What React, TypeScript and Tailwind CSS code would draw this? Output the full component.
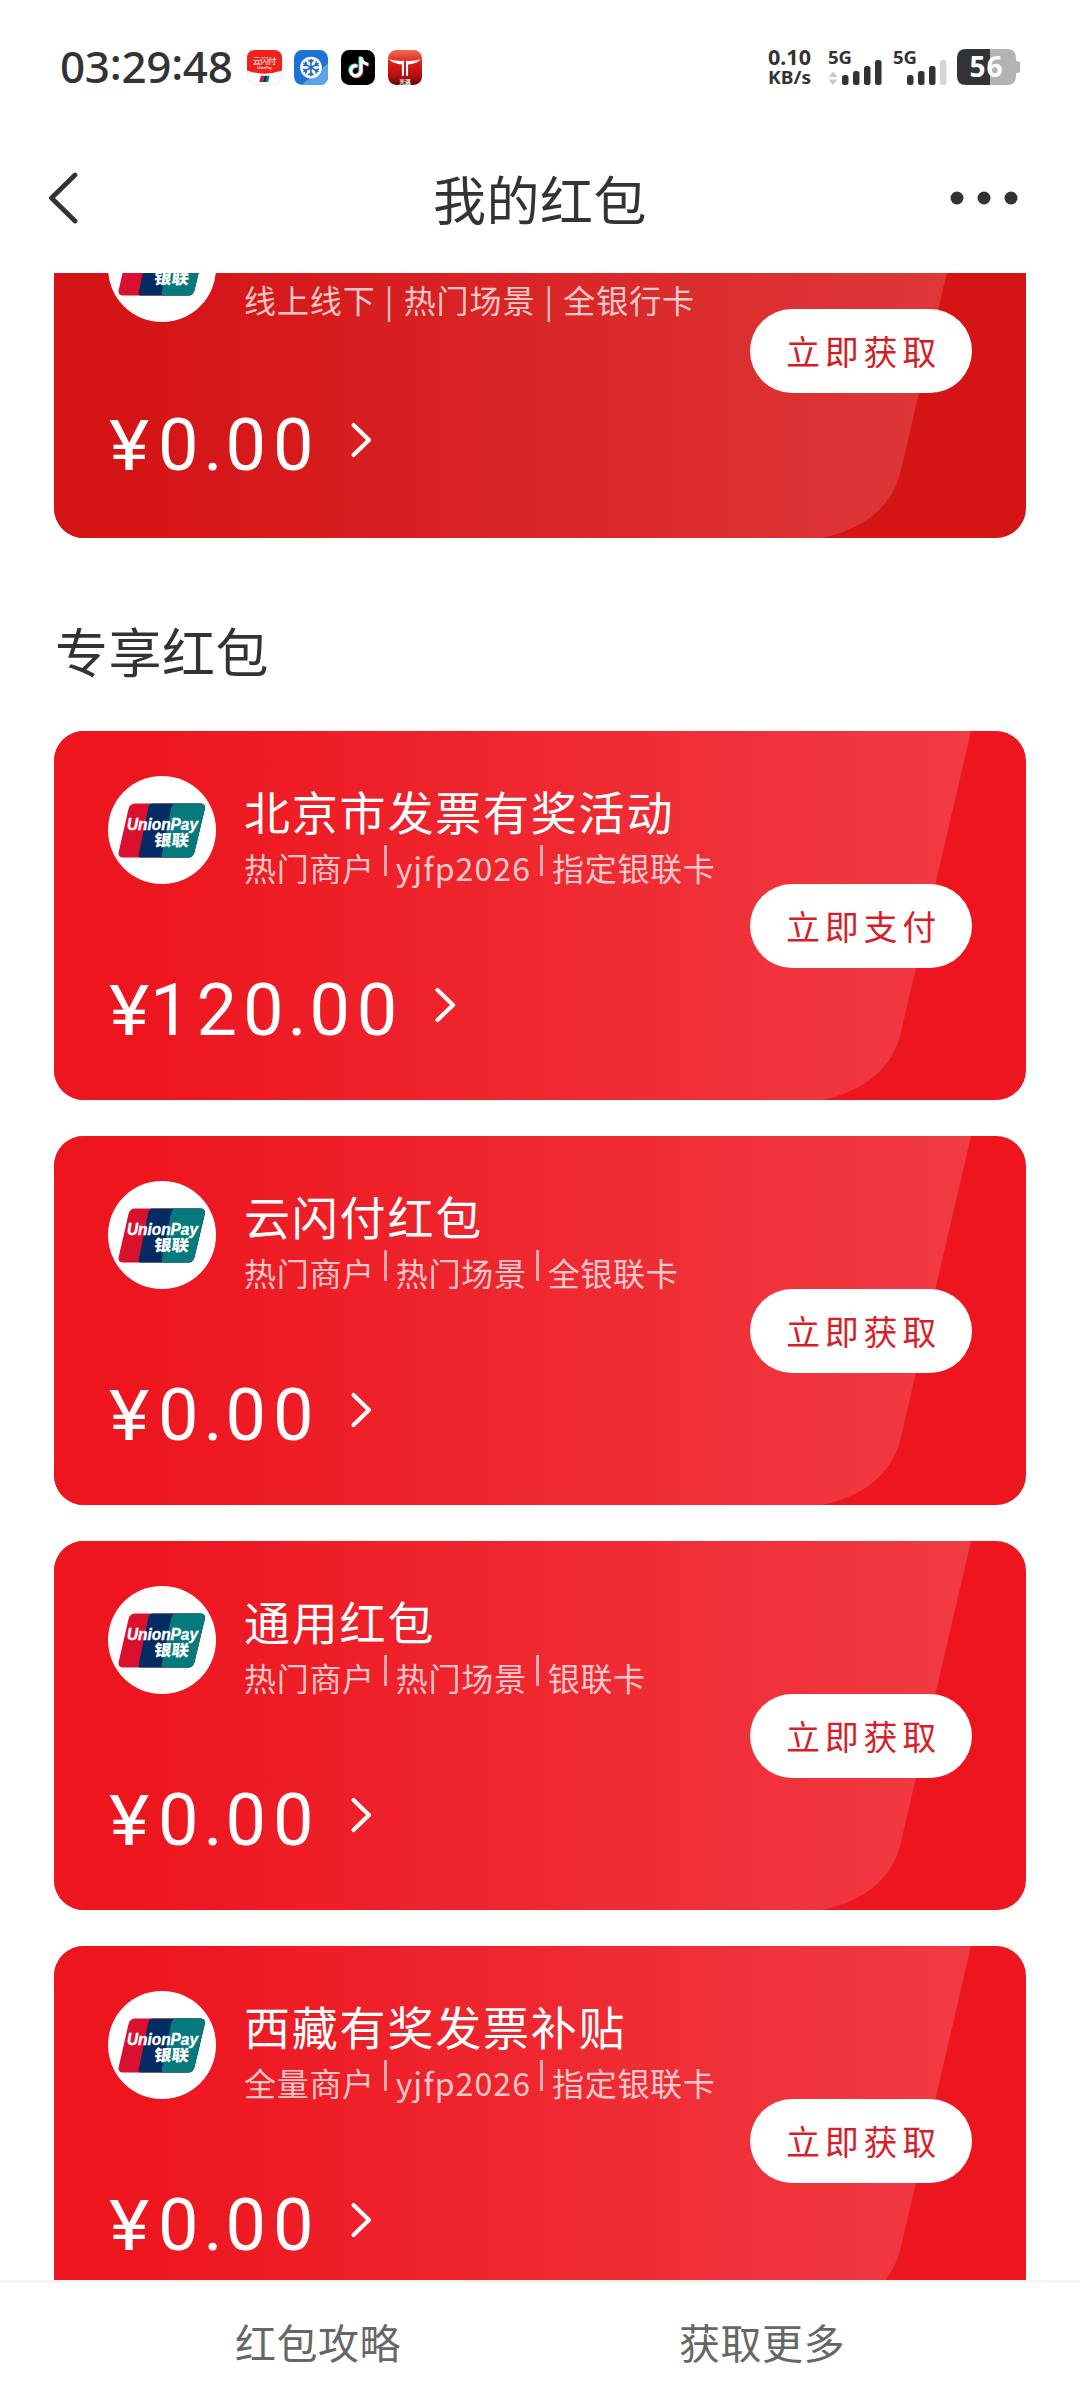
import React from "react";

type Card = {
  title: string;
  tags: string[];
  whole: string;
  action: string;
  dark?: boolean;
};

const cards: Card[] = [
  { title: "北京市发票有奖活动", tags: ["热门商户", "yjfp2026", "指定银联卡"], whole: "120", action: "立即支付" },
  { title: "云闪付红包", tags: ["热门商户", "热门场景", "全银联卡"], whole: "0", action: "立即获取" },
  { title: "通用红包", tags: ["热门商户", "热门场景", "银联卡"], whole: "0", action: "立即获取" },
  { title: "西藏有奖发票补贴", tags: ["全量商户", "yjfp2026", "指定银联卡"], whole: "0", action: "立即获取" },
];

function UnionPayLogo() {
  return (
    <div className="mt-[45px] flex h-[108px] w-[108px] shrink-0 items-center justify-center rounded-full bg-white">
      <svg width="88" height="55" viewBox="0 0 88 55">
        <defs>
          <clipPath id="up-shape">
            <path d="M17 .5H82Q88 .5 86.600 6.500L76.500 49Q75 54.500 70 54.500H5Q-.5 54.500 .8 48.500L10.500 6Q12 .5 17 .5Z" />
          </clipPath>
        </defs>
        <g clipPath="url(#up-shape)">
          <rect width="88" height="55" fill="#d9112f" />
          <path d="M32 0H88V55H22Q20 55 21 50L30 6Q31 0 35 0Z" fill="#042b62" />
          <path d="M59 0H88V55H46Q43 55 44 50L53 6Q54 0 59 0Z" fill="#047a7d" />
        </g>
        <text x="9" y="27" fontSize="17" fontWeight="700" fontStyle="italic" fill="#fff" stroke="#fff" strokeWidth=".4" textLength="71" lengthAdjust="spacingAndGlyphs" fontFamily="Liberation Sans, sans-serif">UnionPay</text>
        <text x="36" y="43" fontSize="16" fontWeight="900" fill="#fff" textLength="35" lengthAdjust="spacingAndGlyphs" transform="skewX(-6) translate(4 0)" fontFamily="Noto Sans CJK SC, sans-serif">银联</text>
      </svg>
    </div>
  );
}

function CardShade({ dark }: { dark?: boolean }) {
  const id = dark ? "shade-dark" : "shade-bright";
  return (
    <svg className="absolute inset-0" width="972" height="369" viewBox="0 0 972 369">
      <defs>
        <linearGradient id={id} gradientUnits="userSpaceOnUse" x1="0" y1="0" x2="920" y2="0">
          <stop offset="0.1" stopColor={dark ? "#d51416" : "#ed161f"} />
          <stop offset="1" stopColor={dark ? "#de393a" : "#f13b43"} />
        </linearGradient>
      </defs>
      <path d="M0 0H917L846 305Q832 355 768 369H0Z" fill={`url(#${id})`} />
    </svg>
  );
}

function Amount({ whole }: { whole: string }) {
  return (
    <div className="flex items-start">
      <span className="w-[49px] origin-left scale-x-108 text-[71px] leading-[72px]">¥</span>
      <span className={whole === "120" ? "-ml-[8px] text-[72px] leading-[72px] tracking-[6px]" : "text-[72px] leading-[72px] tracking-[7px]"}>{whole}</span>
      <span className="-ml-[2px] w-[22px] text-[72px] leading-[72px]">.</span>
      <span className="text-[72px] leading-[72px] tracking-[7px]">00</span>
    </div>
  );
}

function RedCard({ card }: { card: Card }) {
  const dark = card.dark;
  return (
    <article className={`relative h-[369px] w-[972px] shrink-0 overflow-hidden rounded-[30px] text-white ${dark ? "bg-[#d51416]" : "bg-[#ed161f]"}`}>
      <CardShade dark={dark} />
      <div className="relative flex h-full justify-between pl-[54px] pr-[54px]">
        <div className="flex flex-col">
          <div className="flex">
            <UnionPayLogo />
            <div className={dark ? "ml-[28px] pt-[44px]" : "ml-[28px] pt-[51px]"}>
              <h2 className="h-[60px] whitespace-nowrap text-[46px] leading-[56px] tracking-[1.8px]">{card.title}</h2>
              {dark ? (
                <p className="mt-[4px] whitespace-pre text-[32px] leading-[44px] tracking-[0.9px] text-white/75 [word-spacing:1.200px]">{card.tags.join(" | ")}</p>
              ) : (
                <div className="mt-px flex text-[32px] leading-[48px] text-white/75">
                  {card.tags.map((tag, i) => (
                    <React.Fragment key={tag}>
                      {i > 0 && <i className="ml-[9px] mr-[9px] mt-[2px] h-[31px] w-[3px] bg-white/60" />}
                      <span className={tag === "yjfp2026" ? "whitespace-nowrap tracking-[1.100px]" : "whitespace-nowrap tracking-[0.7px]"}>{tag}</span>
                    </React.Fragment>
                  ))}
                </div>
              )}
            </div>
          </div>
          <div className={`absolute left-[55px] flex font-[Roboto] ${dark ? "top-[241px]" : "top-[244px]"}`}>
            <Amount whole={card.whole} />
            <svg className="ml-[30px] mt-[11px]" width="24" height="38" viewBox="0 0 24 38" fill="none" stroke="#fff" strokeWidth="4.200" strokeLinecap="round" strokeLinejoin="round">
              <path d="M3.500 4L19 19L3.500 34" />
            </svg>
          </div>
        </div>
        <button className={`flex h-[84px] w-[222px] items-center justify-center rounded-full bg-white pb-[2px] pl-[5px] text-[34px] tracking-[4.700px] ${dark ? "mt-[140px] text-[#d51c26]" : "mt-[153px] text-[#d81e28]"}`}>
          {card.action}
        </button>
      </div>
    </article>
  );
}

function Signal({ arrows, weak }: { arrows?: boolean; weak?: boolean }) {
  return (
    <svg className="overflow-visible" width="56" height="38" viewBox="0 0 56 38" fill="#333">
      <text x="0" y="15.500" fontSize="18.500" fontWeight="700" fontFamily="Noto Sans, sans-serif" textLength="24" lengthAdjust="spacingAndGlyphs">5G</text>
      {arrows && <path d="M.5 29L5 23.500L9.500 29ZM.5 31.500L5 37L9.500 31.500Z" fill="#c9c9c9" />}
      <rect x="14" y="27" width="6.500" height="10" rx="2.500" />
      <rect x="25" y="23" width="6.500" height="14" rx="2.500" />
      <rect x="36" y="18" width="6.500" height="19" rx="2.500" />
      <rect x="47" y="12" width="6.500" height="25" rx="2.500" fill={weak ? "#d4d4d4" : "#333"} />
    </svg>
  );
}

function StatusBar() {
  return (
    <div className="flex h-[132px] items-start pl-[60px] pr-[60px] pt-[48px] text-[#333]">
      <span className="-mt-px flex w-[187px] font-['Noto_Sans'] text-[44px] font-medium leading-[38px] tracking-[-0.300px]">
        03<span className="-mt-[3px]">:</span>29<span className="-mt-[3px]">:</span>48
      </span>
      <div className="mt-[2px] flex gap-[12px]">
        <svg width="35" height="35" viewBox="0 0 34 34">
          <rect x=".5" y=".5" width="33" height="33" rx="8" fill="#fff" stroke="#eee" />
          <path d="M8 0H26Q34 0 34 8V20Q17 26 0 20V8Q0 0 8 0Z" fill="#f3211e" />
          <text x="5.500" y="14" fontSize="8" fill="#fff" textLength="23" fontFamily="Noto Sans CJK SC, sans-serif">云闪付</text>
          <text x="10" y="18.500" fontSize="4" fill="#fff" textLength="14" fontFamily="Liberation Sans, sans-serif">UnionPay</text>
          <path d="M13.500 25H17L15.500 31H12Z" fill="#d9112f" />
          <path d="M17 25H20L18.500 31H15.500Z" fill="#042b62" />
          <path d="M20 25H22L20.500 31H18Z" fill="#047a7d" />
        </svg>
        <svg width="35" height="35" viewBox="0 0 34 34">
          <rect width="33" height="34" rx="8" fill="#1c74d2" />
          <path d="M7 34L33 13V26Q33 34 25 34Z" fill="#5ca4e8" />
          <circle cx="16.500" cy="17" r="10.500" fill="#fff" />
          <g stroke="#1c6cc4" strokeWidth="1.500" fill="none">
            {[0, 60, 120, 180, 240, 300].map((a) => (
              <path key={a} transform={`rotate(${a} 16.500 17)`} d="M16.500 17V8.500M14 9.500L16.500 12L19 9.500" />
            ))}
          </g>
        </svg>
        <svg width="35" height="35" viewBox="0 0 34 34" fill="none" strokeWidth="3">
          <rect width="33" height="34" rx="8" fill="#000" />
          <path d="M16 15.500A5 5 0 1 0 19.500 21V7Q20 13 26.500 14" stroke="#25f4ee" transform="translate(-1 -.7)" />
          <path d="M16 15.500A5 5 0 1 0 19.500 21V7Q20 13 26.500 14" stroke="#fe2c55" transform="translate(.7 .7)" />
          <path d="M16 15.500A5 5 0 1 0 19.500 21V7Q20 13 26.500 14" stroke="#fff" />
        </svg>
        <svg width="35" height="35" viewBox="0 0 34 34">
          <defs>
            <linearGradient id="redapp" x1="0" y1="0" x2="0" y2="1">
              <stop offset="0" stopColor="#ef6a58" />
              <stop offset=".4" stopColor="#d81d18" />
              <stop offset=".75" stopColor="#b01010" />
              <stop offset="1" stopColor="#5c0808" />
            </linearGradient>
          </defs>
          <rect width="33" height="34" rx="8" fill="url(#redapp)" />
          <path d="M1 9Q8 11 15.500 10.500V25H13.500V14Q6 14 1 9ZM32 9Q25 11 17.500 10.500V25H19.500V14Q27 14 32 9Z" fill="#fff" />
          <text x="11" y="33" fontSize="5.500" fill="#fff" fontWeight="700" fontFamily="Noto Sans CJK SC, sans-serif">光遇</text>
        </svg>
      </div>
      <div className="ml-auto flex items-start">
        <svg className="mr-[15px] overflow-visible" width="46" height="38" viewBox="0 0 46 38" fill="#333" fontWeight="700" fontFamily="Noto Sans, sans-serif">
          <text x="1" y="17" fontSize="22" textLength="43" lengthAdjust="spacingAndGlyphs">0.10</text>
          <text x="1" y="36" fontSize="18.500" textLength="43" lengthAdjust="spacingAndGlyphs">KB/s</text>
        </svg>
        <Signal arrows />
        <span className="w-[9px]" />
        <Signal weak />
        <svg className="ml-[8px]" width="63" height="38" viewBox="0 0 63 38">
          <path d="M33 1H50Q59 1 59 10V28Q59 37 50 37H33Z" fill="#b3b3b3" />
          <path d="M59 13Q63 13 63 15V23Q63 25 59 25Z" fill="#b3b3b3" />
          <path d="M33 1H9Q0 1 0 10V28Q0 37 9 37H33Z" fill="#333" />
          <text x="12.500" y="29" fontSize="28" fontWeight="700" fill="#fff" fontFamily="Noto Sans, sans-serif" textLength="33">56</text>
        </svg>
      </div>
    </div>
  );
}

export default function App() {
  return (
    <main className="flex h-[2400px] w-[1080px] flex-col overflow-hidden bg-white font-['Noto_Sans_CJK_SC',sans-serif]">
      <StatusBar />
      <header className="flex h-[141px] shrink-0 items-start justify-between pl-[46px] pr-[60px] text-[#333]">
        <svg className="mt-[40px]" width="34" height="52" viewBox="0 0 34 52" fill="none" stroke="#333" strokeWidth="4.800" strokeLinecap="round" strokeLinejoin="round">
          <path d="M29 3L5.500 26L29 49" />
        </svg>
        <h1 className="ml-[50px] mt-[26px] text-[53px] leading-[80px] tracking-[0.500px]">我的红包</h1>
        <svg className="mt-[58px]" width="70" height="16" viewBox="0 0 70 16" fill="#333">
          <circle cx="7" cy="8" r="6.500" />
          <circle cx="34" cy="8" r="6.500" />
          <circle cx="61" cy="8" r="6.500" />
        </svg>
      </header>
      <section className="flex h-[2007px] shrink-0 flex-col items-center overflow-hidden">
        <div className="flex h-[265px] shrink-0 items-end overflow-hidden">
          <RedCard card={{ title: "通用红包", tags: ["线上线下", "热门场景", "全银行卡"], whole: "0", action: "立即获取", dark: true }} />
        </div>
        <h2 className="flex h-[193px] w-[970px] shrink-0 items-center text-[53px] tracking-[0.500px] text-[#333]">
          <span className="pt-[32px]">专享红包</span>
        </h2>
        <div className="flex flex-col gap-[36px]">
          {cards.map((card) => (
            <RedCard key={card.title} card={card} />
          ))}
        </div>
      </section>
      <footer className="flex h-[120px] shrink-0 border-t-[3px] border-[#f5f5f5] pl-[96px] pr-[96px] text-[41px] leading-[117px] tracking-[0.500px] text-[#666]">
        <span className="flex-1 text-center">红包攻略</span>
        <span className="flex-1 text-center">获取更多</span>
      </footer>
    </main>
  );
}
